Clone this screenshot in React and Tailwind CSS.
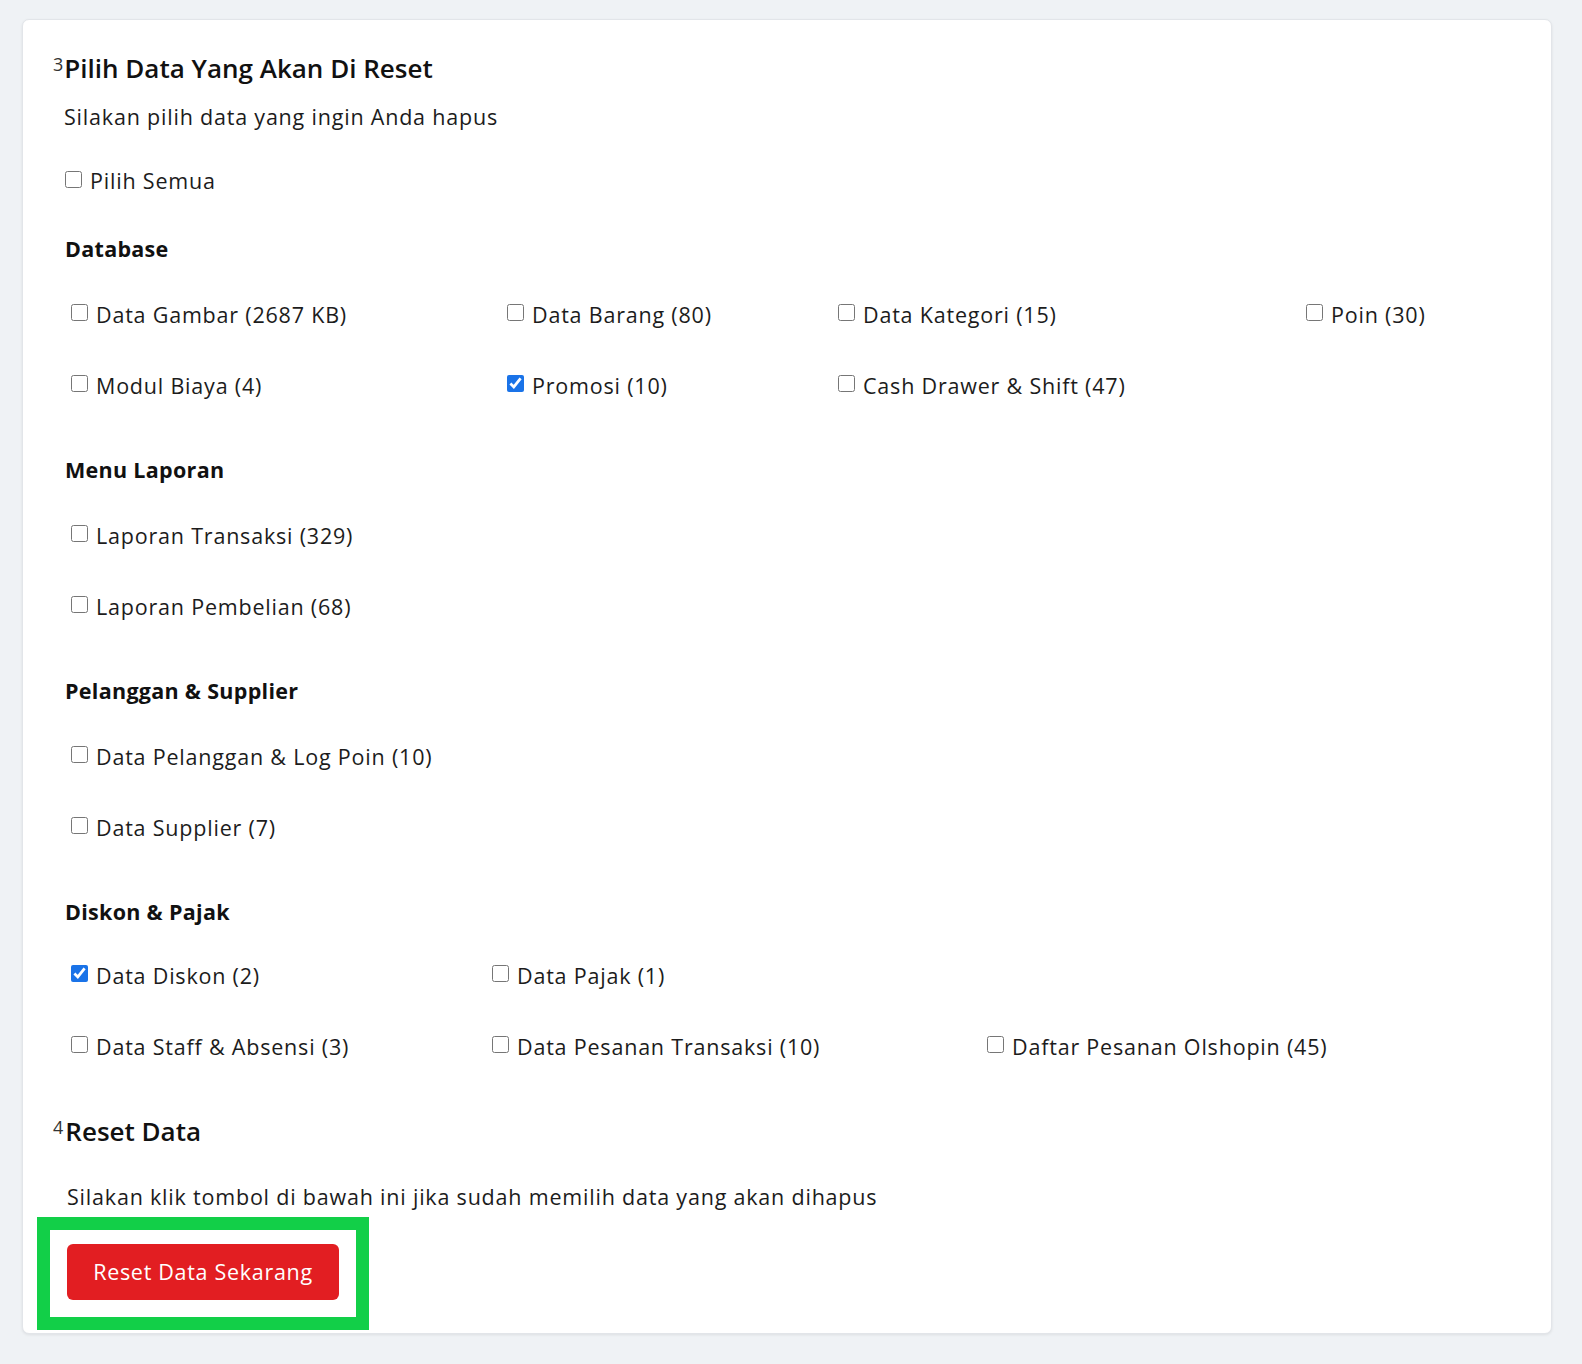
import React from "react";

const font = { fontFamily: '"Open Sans", "Noto Sans", sans-serif' };

function Check({ label, checked }) {
  return (
    <label className="flex items-center gap-[8px] text-[21.5px] text-[#1c1c1c] leading-[30px] tracking-[0.8px]">
      <input
        type="checkbox"
        defaultChecked={checked}
        className="w-[17px] h-[17px] mb-[4px] accent-[#1a73e8] shrink-0"
      />
      <span>{label}</span>
    </label>
  );
}

function SectionTitle({ children, mt = "mt-[38px]", mb = "mb-[15px]" }) {
  return (
    <div className={`${mt} ${mb} h-[30px] flex items-center text-[21.5px] font-bold text-[#111] tracking-[0.3px]`}>
      {children}
    </div>
  );
}

function Row({ cols, items }) {
  return (
    <div className={`grid h-[71px] items-center pl-[6px] ${cols}`}>
      {items.map((it, i) => (
        <div key={i}>{it ? <Check label={it[0]} checked={it[1]} /> : null}</div>
      ))}
    </div>
  );
}

export default function App() {
  const dbCols = "grid-cols-[436px_331px_468px_1fr]";
  const dkCols = "grid-cols-[421px_495px_1fr]";
  return (
    <div className="min-h-[1364px] bg-[#eff2f5] pt-[19px] pl-[22px]" style={font}>
      <div className="w-[1530px] bg-white border border-[#e2e5e9] rounded-[7px] shadow-[0_1px_3px_rgba(0,0,0,0.08)] pt-[30px] pb-[33px] pl-[42px]">
        <div className="h-[36px] flex items-center ml-[-12px] text-[#111]">
          <span className="self-start mt-[4px] text-[18px] leading-[20px] text-[#333] mr-[1px]">3</span>
          <span className="text-[26px] font-semibold">Pilih Data Yang Akan Di Reset</span>
        </div>
        <div className="mt-[16px] ml-[-1px] h-[30px] flex items-center text-[21.5px] text-[#1c1c1c] tracking-[0.8px]">
          Silakan pilih data yang ingin Anda hapus
        </div>
        <div className="mt-[34px] h-[30px] flex items-center">
          <Check label="Pilih Semua" />
        </div>

        <SectionTitle>Database</SectionTitle>
        <Row cols={dbCols} items={[["Data Gambar (2687 KB)"], ["Data Barang (80)"], ["Data Kategori (15)"], ["Poin (30)"]]} />
        <Row cols={dbCols} items={[["Modul Biaya (4)"], ["Promosi (10)", true], ["Cash Drawer & Shift (47)"], null]} />

        <SectionTitle mt="mt-[34px]">Menu Laporan</SectionTitle>
        <Row cols="grid-cols-1" items={[["Laporan Transaksi (329)"]]} />
        <Row cols="grid-cols-1" items={[["Laporan Pembelian (68)"]]} />

        <SectionTitle mt="mt-[34px]">Pelanggan &amp; Supplier</SectionTitle>
        <Row cols="grid-cols-1" items={[["Data Pelanggan & Log Poin (10)"]]} />
        <Row cols="grid-cols-1" items={[["Data Supplier (7)"]]} />

        <SectionTitle mt="mt-[34px]" mb="mb-[13px]">Diskon &amp; Pajak</SectionTitle>
        <Row cols={dkCols} items={[["Data Diskon (2)", true], ["Data Pajak (1)"], null]} />
        <Row cols={dkCols} items={[["Data Staff & Absensi (3)"], ["Data Pesanan Transaksi (10)"], ["Daftar Pesanan Olshopin (45)"]]} />

        <div className="mt-[31px] h-[36px] flex items-center ml-[-12px] text-[#111]">
          <span className="self-start mt-[4px] text-[18px] leading-[20px] text-[#333] mr-[2px]">4</span>
          <span className="text-[26px] font-semibold">Reset Data</span>
        </div>
        <div className="mt-[33px] ml-[2px] h-[30px] flex items-center text-[21.5px] text-[#1c1c1c] tracking-[0.8px]">
          Silakan klik tombol di bawah ini jika sudah memilih data yang akan dihapus
        </div>
        <div className="mt-[32px] ml-[2px] relative w-[272px]">
          <button className="w-[272px] h-[56px] bg-[#e21e22] rounded-[6px] text-white text-[21.5px] font-medium tracking-[0.7px]">
            Reset Data Sekarang
          </button>
          <div className="absolute -left-[30px] -top-[27px] -right-[30px] -bottom-[30px] border-[13px] border-[#12cf48] pointer-events-none" />
        </div>
      </div>
    </div>
  );
}
